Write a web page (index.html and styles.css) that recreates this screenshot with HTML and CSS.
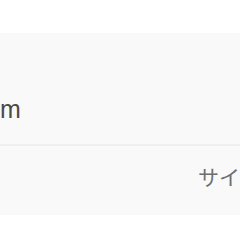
FILE: index.html
```html
<!DOCTYPE html>
<html lang="ja">
<head>
  <meta charset="UTF-8">
  <title>Settings</title>
  <link rel="stylesheet" href="styles.css">
</head>
<body>
  <div class="panel">
    <div class="row row-top">
      <span class="domain">m</span>
    </div>
    <div class="row row-bottom">
      <span class="label">サイ</span>
    </div>
  </div>
</body>
</html>
```

FILE: styles.css
```css
body {
  margin: 0;
  background-color: #ffffff;
  font-family: "Liberation Sans", "Noto Sans CJK JP", sans-serif;
  overflow: hidden;
}

.panel {
  margin-top: 33px;
  background-color: #f9f9f9;
}

.row {
  display: flex;
  overflow: hidden;
  white-space: nowrap;
}

.row-top {
  height: 111px;
  align-items: flex-end;
  border-bottom: 2px solid #efefef;
}

.domain {
  font-size: 25px;
  color: #4a4a4a;
  line-height: 1;
  padding-bottom: 22px;
}

.row-bottom {
  height: 69px;
  justify-content: flex-end;
}

.label {
  font-family: "Noto Sans CJK JP", sans-serif;
  font-size: 21px;
  color: #6f6f6f;
  line-height: 1;
  padding-top: 20px;
}
```
